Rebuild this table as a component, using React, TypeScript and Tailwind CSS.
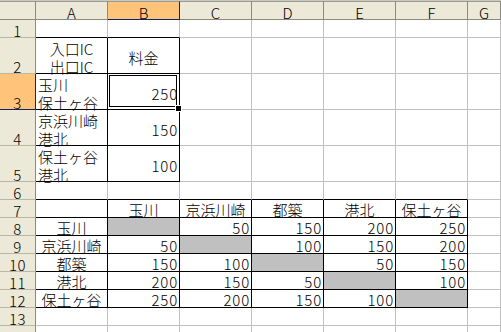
import React from 'react'

// Excel 2003 風のシート（XP テーマ）

const COLS = ['A', 'B', 'C', 'D', 'E', 'F', 'G']
const ROW_H = [18, 36, 36, 36, 36, 18, 18, 18, 18, 18, 18, 18, 18, 18]

type Cell = { t?: string; h?: 'l' | 'c' | 'r'; v?: 'c' | 'b'; gray?: boolean }

const NAMES = ['玉川', '京浜川崎', '都築', '港北', '保土ヶ谷']
const MATRIX = [
  [null, 50, 150, 200, 250],
  [50, null, 100, 150, 200],
  [150, 100, null, 50, 150],
  [200, 150, 50, null, 100],
  [250, 200, 150, 100, null],
]

const CELLS: Record<string, Cell> = {
  A2: { t: '入口IC\n出口IC', h: 'c', v: 'c' },
  B2: { t: '料金', h: 'c', v: 'c' },
  A3: { t: '玉川\n保土ヶ谷', h: 'l', v: 'c' },
  B3: { t: '250', h: 'r', v: 'c' },
  A4: { t: '京浜川崎\n港北', h: 'l', v: 'c' },
  B4: { t: '150', h: 'r', v: 'c' },
  A5: { t: '保土ヶ谷\n港北', h: 'l', v: 'c' },
  B5: { t: '100', h: 'r', v: 'c' },
}
NAMES.forEach((n, i) => {
  CELLS[COLS[i + 1] + '7'] = { t: n, h: 'c' }
  CELLS['A' + (i + 8)] = { t: n, h: 'c' }
  MATRIX[i].forEach((val, j) => {
    CELLS[COLS[j + 1] + (i + 8)] = val == null ? { gray: true } : { t: String(val), h: 'r' }
  })
})

function boxed(c: number, r: number) {
  if (c <= 1 && r >= 2 && r <= 5) return true
  if (c <= 5 && r >= 7 && r <= 12) return true
  return false
}

const GRID = 'grid grid-cols-[36px_repeat(6,72px)_1fr]'

export default function App() {
  return (
    <div className="w-[501px] h-[332px] overflow-hidden bg-white font-['Noto_Sans_CJK_JP',sans-serif] font-light text-[15px] text-black">
      <div className="h-[1px] bg-[#c8c8c8]" />
      {/* 列見出し */}
      <div className={`${GRID} h-[19px] grid-rows-[19px]`}>
        <div className="bg-[#ece9d8] border-t border-r border-b border-t-[#9d9b8e] border-r-[#8c8a7e] border-b-[#8c8a7e]" />
        {COLS.map((c) => (
          <div
            key={c}
            className={`border-t border-r border-b border-t-[#9d9b8e] flex items-end justify-center leading-[13px] ${
              c === 'B'
                ? 'bg-[#ffc37a] border-r-[#0a246a] border-b-[#0a246a]'
                : 'bg-[#ece9d8] border-r-[#8c8a7e] border-b-[#8c8a7e]'
            }`}
          >
            {c}
          </div>
        ))}
      </div>

      {ROW_H.map((h, ri) => {
        const r = ri + 1
        const tall = h === 36
        return (
          <div key={r} className={`${GRID} ${tall ? 'h-[36px] grid-rows-[36px]' : 'h-[18px] grid-rows-[18px]'}`}>
            <div
              className={`border-r border-b flex items-end justify-center leading-[13px] tracking-[0.5px] ${
                r === 3
                  ? 'bg-[#ffc37a] border-r-[#0a246a] border-b-[#0a246a]'
                  : 'bg-[#ece9d8] border-r-[#8c8a7e] border-b-[#b9b6a6]'
              }`}
            >
              {r < 14 ? r : ''}
            </div>
            {COLS.map((c, ci) => {
              const cell = CELLS[c + r] || {}
              const rb = boxed(ci, r) || boxed(ci + 1, r)
              const bb = boxed(ci, r) || boxed(ci, r + 1)
              const hz =
                cell.h === 'c'
                  ? 'justify-center text-center px-[2px]'
                  : cell.h === 'r'
                    ? 'justify-end text-right pl-[2px] pr-[1px] tracking-[0.8px]'
                    : 'justify-start text-left px-[2px]'
              const vt = cell.v === 'c' ? 'items-center' : 'items-end'
              return (
                <div
                  key={c}
                  className={`relative flex min-h-0 border-r border-b ${hz} ${vt} ${rb ? 'border-r-black' : 'border-r-[#c0c0c0]'} ${
                    bb ? 'border-b-black' : 'border-b-[#c0c0c0]'
                  } ${cell.gray ? 'bg-[#c0c0c0]' : ''}`}
                >
                  {cell.t && (
                    <div
                      className={`whitespace-pre-line ${
                        tall ? 'relative top-[2px] leading-[18px]' : 'leading-[14px]'
                      }`}
                    >
                      {cell.t}
                    </div>
                  )}
                  {c === 'B' && r === 3 && (
                    <>
                      <div className="absolute top-[1px] left-[1px] right-[2px] bottom-[2px] border border-black pointer-events-none" />
                      <div className="absolute -right-[3px] -bottom-[3px] w-[7px] h-[7px] bg-black border border-white z-10" />
                    </>
                  )}
                </div>
              )
            })}
          </div>
        )
      })}
    </div>
  )
}
